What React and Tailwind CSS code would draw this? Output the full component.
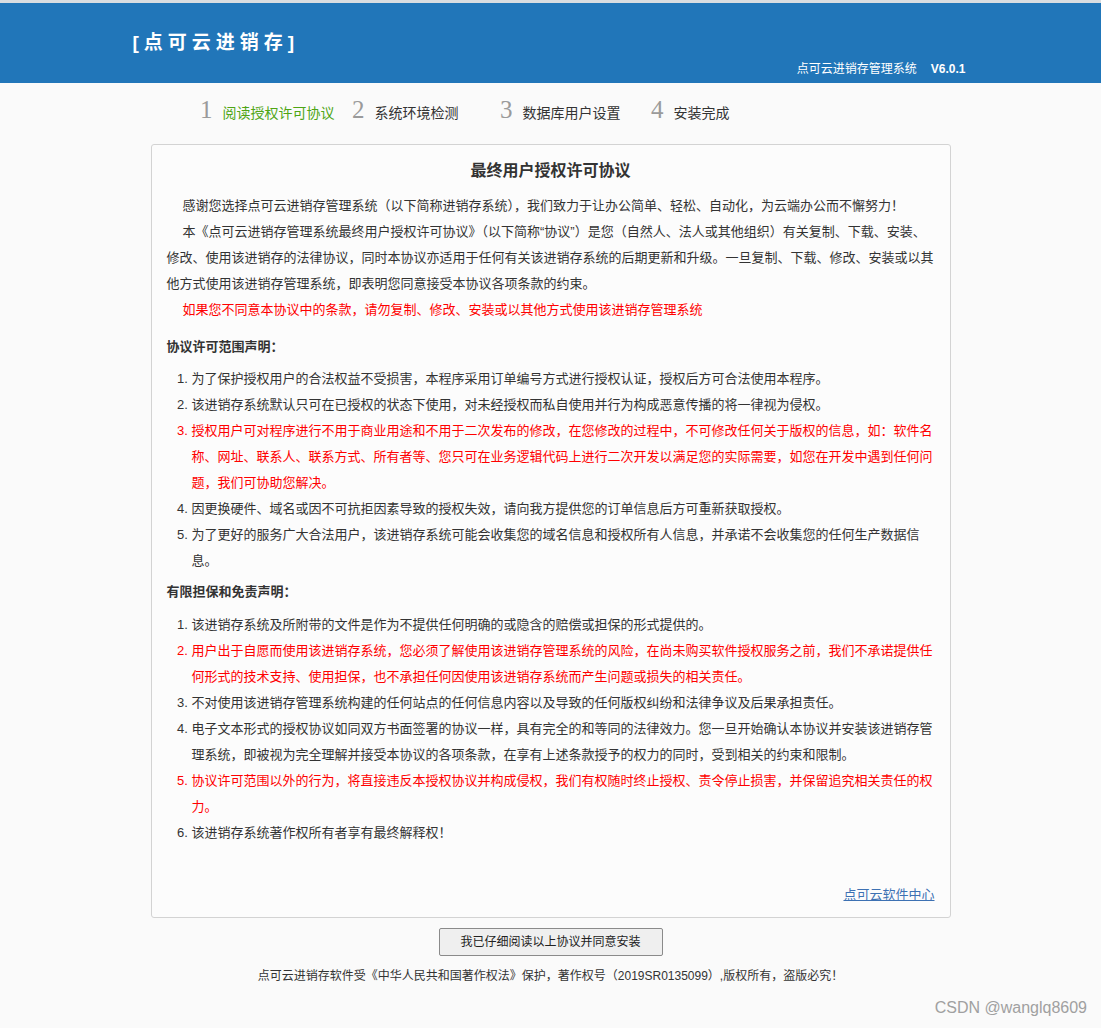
import React from "react";

const font = { fontFamily: '"Liberation Sans", "Noto Sans CJK SC", sans-serif' };

function Step({ n, label, active, w }) {
  return (
    <div className={"flex items-baseline shrink-0 " + w}>
      <span className="text-[25px] leading-none text-[#9a9a9a] mr-[10px]" style={{ fontFamily: '"Liberation Serif", serif' }}>{n}</span>
      <span className={"text-[14px] " + (active ? "text-[#4ea514]" : "text-[#333]")}>{label}</span>
    </div>
  );
}

export default function App() {
  const list1 = [
    { t: "为了保护授权用户的合法权益不受损害，本程序采用订单编号方式进行授权认证，授权后方可合法使用本程序。" },
    { t: "该进销存系统默认只可在已授权的状态下使用，对未经授权而私自使用并行为构成恶意传播的将一律视为侵权。" },
    { t: "授权用户可对程序进行不用于商业用途和不用于二次发布的修改，在您修改的过程中，不可修改任何关于版权的信息，如：软件名称、网址、联系人、联系方式、所有者等、您只可在业务逻辑代码上进行二次开发以满足您的实际需要，如您在开发中遇到任何问题，我们可协助您解决。", red: true },
    { t: "因更换硬件、域名或因不可抗拒因素导致的授权失效，请向我方提供您的订单信息后方可重新获取授权。" },
    { t: "为了更好的服务广大合法用户，该进销存系统可能会收集您的域名信息和授权所有人信息，并承诺不会收集您的任何生产数据信息。" },
  ];
  const list2 = [
    { t: "该进销存系统及所附带的文件是作为不提供任何明确的或隐含的赔偿或担保的形式提供的。" },
    { t: "用户出于自愿而使用该进销存系统，您必须了解使用该进销存管理系统的风险，在尚未购买软件授权服务之前，我们不承诺提供任何形式的技术支持、使用担保，也不承担任何因使用该进销存系统而产生问题或损失的相关责任。", red: true },
    { t: "不对使用该进销存管理系统构建的任何站点的任何信息内容以及导致的任何版权纠纷和法律争议及后果承担责任。" },
    { t: "电子文本形式的授权协议如同双方书面签署的协议一样，具有完全的和等同的法律效力。您一旦开始确认本协议并安装该进销存管理系统，即被视为完全理解并接受本协议的各项条款，在享有上述条款授予的权力的同时，受到相关的约束和限制。" },
    { t: "协议许可范围以外的行为，将直接违反本授权协议并构成侵权，我们有权随时终止授权、责令停止损害，并保留追究相关责任的权力。", red: true },
    { t: "该进销存系统著作权所有者享有最终解释权！" },
  ];

  return (
    <div className="min-h-[1028px] bg-[#fafafa] text-[#333] relative" style={font}>
      <div className="h-[3px] bg-[#d9dde1]" />
      <header className="h-[80px] bg-[#2176b9]">
        <div className="w-[840px] mx-auto h-full flex flex-col">
          <div className="pt-[27px] pl-[2px] text-white text-[19px] font-bold tracking-[5px] leading-[26px]">[点可云进销存]</div>
          <div className="mt-[5px] self-end pr-[5px] text-white text-[12px] leading-[16px]">
            点可云进销存管理系统<span className="ml-[14px] font-bold">V6.0.1</span>
          </div>
        </div>
      </header>

      <div className="flex pl-[200px] pt-[14px] h-[61px]">
        <Step n="1" label="阅读授权许可协议" active w="w-[152px]" />
        <Step n="2" label="系统环境检测" w="w-[148px]" />
        <Step n="3" label="数据库用户设置" w="w-[151px]" />
        <Step n="4" label="安装完成" w="w-[150px]" />
      </div>

      <div className="w-[800px] mx-auto border border-[#d3d3d3] rounded-[3px] bg-[#fcfcfc] px-[15px] pt-[11px] pb-[9px]">
        <h1 className="text-center text-[16px] font-bold leading-[30px] text-[#333]">最终用户授权许可协议</h1>
        <div className="mt-[7px] text-[13px] leading-[26px]">
          <p className="indent-[16px]">感谢您选择点可云进销存管理系统（以下简称进销存系统），我们致力于让办公简单、轻松、自动化，为云端办公而不懈努力！</p>
          <p className="indent-[16px]">本《点可云进销存管理系统最终用户授权许可协议》（以下简称“协议”）是您（自然人、法人或其他组织）有关复制、下载、安装、修改、使用该进销存的法律协议，同时本协议亦适用于任何有关该进销存系统的后期更新和升级。一旦复制、下载、修改、安装或以其他方式使用该进销存管理系统，即表明您同意接受本协议各项条款的约束。</p>
          <p className="indent-[16px] text-[#ff0000]">如果您不同意本协议中的条款，请勿复制、修改、安装或以其他方式使用该进销存管理系统</p>

          <h2 className="mt-[11px] font-bold">协议许可范围声明：</h2>
          <ol className="mt-[6px] list-decimal pl-[25px]">
            {list1.map((it, i) => (
              <li key={i} className={it.red ? "text-[#ff0000]" : ""}>{it.t}</li>
            ))}
          </ol>

          <h2 className="mt-[5px] font-bold">有限担保和免责声明：</h2>
          <ol className="mt-[7px] list-decimal pl-[25px]">
            {list2.map((it, i) => (
              <li key={i} className={it.red ? "text-[#ff0000]" : ""}>{it.t}</li>
            ))}
          </ol>

          <div className="mt-[36px] flex justify-end">
            <a className="underline text-[#3d71b3] text-[13px] leading-[26px]" href="#">点可云软件中心</a>
          </div>
        </div>
      </div>

      <div className="flex justify-center mt-[10px]">
        <button className="w-[224px] h-[28px] bg-[#efefef] border border-[#8a8a8a] rounded-[2px] text-[12px] text-[#222]">我已仔细阅读以上协议并同意安装</button>
      </div>
      <p className="mt-[12px] text-center text-[12px] leading-[16px] text-[#333]">点可云进销存软件受《中华人民共和国著作权法》保护，著作权号（2019SR0135099）,版权所有，盗版必究！</p>

      <div className="absolute right-[14px] bottom-[8px] text-[16px] text-[#a0a0a0]" style={{ fontFamily: '"Liberation Sans", sans-serif' }}>CSDN @wanglq8609</div>
    </div>
  );
}
